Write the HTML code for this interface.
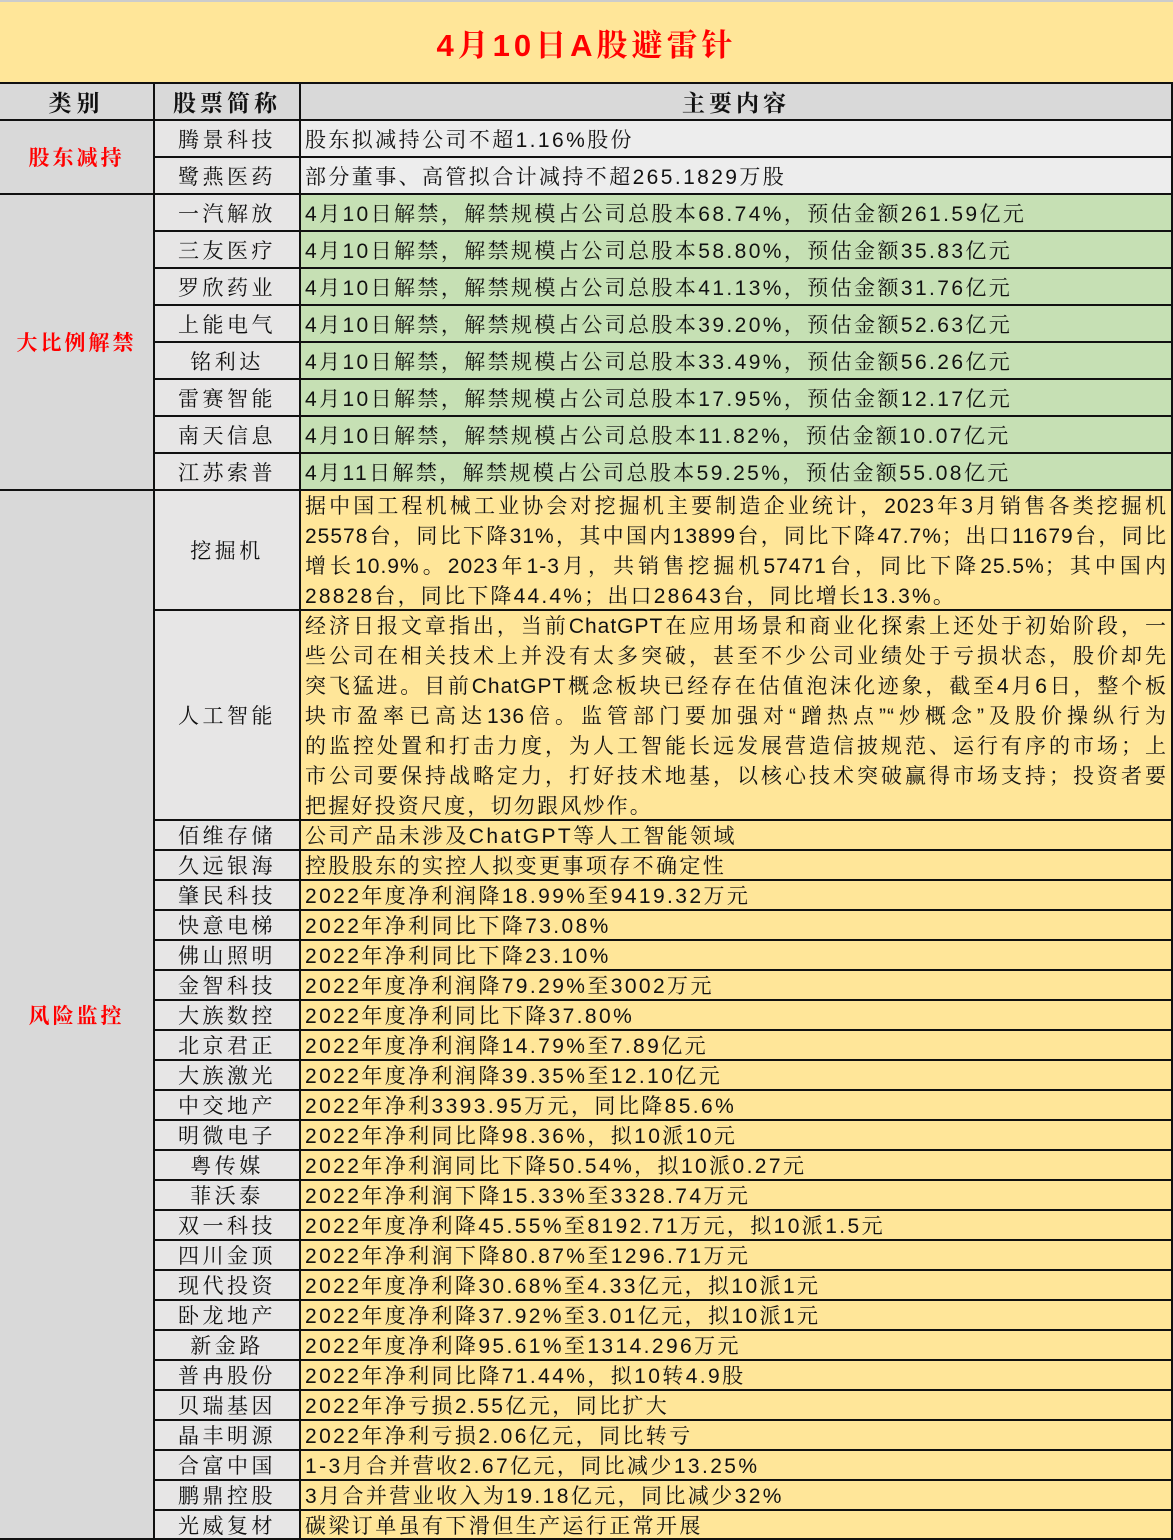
<!DOCTYPE html>
<html><head><meta charset="utf-8">
<style>
*{margin:0;padding:0;box-sizing:border-box}
body{width:1173px;height:1540px;position:relative;overflow:hidden;background:#fff;font-family:"Liberation Sans","Noto Serif CJK SC",serif;color:#111}
.c{position:absolute;border-left:2px solid #111;border-top:2px solid #111;display:flex;align-items:center;white-space:nowrap;overflow:hidden}
.a{background:#d9d9d9;justify-content:center;color:#f00;font-weight:bold;font-size:21px;letter-spacing:3px;left:0;width:153px;border-left:none}
.n{background:#e7e6e6;justify-content:center;font-size:21px;letter-spacing:3.5px;left:153px;width:146px}
.t{left:299px;width:872px;padding-left:4px;font-size:21px;letter-spacing:2.4px}
.g{background:#c6e0b4}.y{background:#ffe699}.e{background:#ededed}
.p{display:block;padding:0 4px 0 4px;white-space:normal}
.p div{height:30px;line-height:30px;text-align:justify;text-align-last:justify;white-space:nowrap;letter-spacing:1px}
.p div.l{text-align-last:left;letter-spacing:2.2px}
</style></head><body>
<div class="c" style="left:0;top:0;width:1173px;height:82px;background:#ffe699;justify-content:center;color:#f00;font-weight:bold;font-size:31px;letter-spacing:4px;border-top:2px solid #ccc;border-left:none">4月10日A股避雷针</div>
<div class="c" style="left:0;top:82px;width:153px;height:37px;background:#d9d9d9;justify-content:center;font-weight:bold;font-size:23px;letter-spacing:5px;border-left:none">类别</div>
<div class="c" style="left:153px;top:82px;width:146px;height:37px;background:#d9d9d9;justify-content:center;font-weight:bold;font-size:23px;letter-spacing:4px">股票简称</div>
<div class="c" style="left:299px;top:82px;width:872px;height:37px;background:#d9d9d9;justify-content:center;font-weight:bold;font-size:23px;letter-spacing:4px">主要内容</div>

<div class="c a" style="top:119px;height:74px">股东减持</div>
<div class="c n" style="top:119px;height:37px">腾景科技</div><div class="c t e" style="top:119px;height:37px">股东拟减持公司不超1.16%股份</div>
<div class="c n" style="top:156px;height:37px">鹭燕医药</div><div class="c t e" style="top:156px;height:37px">部分董事、高管拟合计减持不超265.1829万股</div>

<div class="c a" style="top:193px;height:296px">大比例解禁</div>
<div class="c n" style="top:193px;height:37px">一汽解放</div><div class="c t g" style="top:193px;height:37px">4月10日解禁，解禁规模占公司总股本68.74%，预估金额261.59亿元</div>
<div class="c n" style="top:230px;height:37px">三友医疗</div><div class="c t g" style="top:230px;height:37px">4月10日解禁，解禁规模占公司总股本58.80%，预估金额35.83亿元</div>
<div class="c n" style="top:267px;height:37px">罗欣药业</div><div class="c t g" style="top:267px;height:37px">4月10日解禁，解禁规模占公司总股本41.13%，预估金额31.76亿元</div>
<div class="c n" style="top:304px;height:37px">上能电气</div><div class="c t g" style="top:304px;height:37px">4月10日解禁，解禁规模占公司总股本39.20%，预估金额52.63亿元</div>
<div class="c n" style="top:341px;height:37px">铭利达</div><div class="c t g" style="top:341px;height:37px">4月10日解禁，解禁规模占公司总股本33.49%，预估金额56.26亿元</div>
<div class="c n" style="top:378px;height:37px">雷赛智能</div><div class="c t g" style="top:378px;height:37px">4月10日解禁，解禁规模占公司总股本17.95%，预估金额12.17亿元</div>
<div class="c n" style="top:415px;height:37px">南天信息</div><div class="c t g" style="top:415px;height:37px">4月10日解禁，解禁规模占公司总股本11.82%，预估金额10.07亿元</div>
<div class="c n" style="top:452px;height:37px">江苏索普</div><div class="c t g" style="top:452px;height:37px">4月11日解禁，解禁规模占公司总股本59.25%，预估金额55.08亿元</div>

<div class="c a" style="top:489px;height:1049px">风险监控</div>
<div class="c n" style="top:489px;height:120px">挖掘机</div>
<div class="c t y p" style="top:489px;height:120px;padding-top:1px">
<div>据中国工程机械工业协会对挖掘机主要制造企业统计，2023年3月销售各类挖掘机</div>
<div>25578台，同比下降31%，其中国内13899台，同比下降47.7%；出口11679台，同比</div>
<div>增长10.9%。2023年1-3月，共销售挖掘机57471台，同比下降25.5%；其中国内</div>
<div class="l">28828台，同比下降44.4%；出口28643台，同比增长13.3%。</div></div>
<div class="c n" style="top:609px;height:210px">人工智能</div>
<div class="c t y p" style="top:609px;height:210px;padding-top:1px">
<div>经济日报文章指出，当前ChatGPT在应用场景和商业化探索上还处于初始阶段，一</div>
<div>些公司在相关技术上并没有太多突破，甚至不少公司业绩处于亏损状态，股价却先</div>
<div>突飞猛进。目前ChatGPT概念板块已经存在估值泡沫化迹象，截至4月6日，整个板</div>
<div>块市盈率已高达136倍。监管部门要加强对“蹭热点”“炒概念”及股价操纵行为</div>
<div>的监控处置和打击力度，为人工智能长远发展营造信披规范、运行有序的市场；上</div>
<div>市公司要保持战略定力，打好技术地基，以核心技术突破赢得市场支持；投资者要</div>
<div class="l">把握好投资尺度，切勿跟风炒作。</div></div>

<div class="c n" style="top:819px;height:30px">佰维存储</div><div class="c t y" style="top:819px;height:30px">公司产品未涉及ChatGPT等人工智能领域</div>
<div class="c n" style="top:849px;height:30px">久远银海</div><div class="c t y" style="top:849px;height:30px">控股股东的实控人拟变更事项存不确定性</div>
<div class="c n" style="top:879px;height:30px">肇民科技</div><div class="c t y" style="top:879px;height:30px">2022年度净利润降18.99%至9419.32万元</div>
<div class="c n" style="top:909px;height:30px">快意电梯</div><div class="c t y" style="top:909px;height:30px">2022年净利同比下降73.08%</div>
<div class="c n" style="top:939px;height:30px">佛山照明</div><div class="c t y" style="top:939px;height:30px">2022年净利同比下降23.10%</div>
<div class="c n" style="top:969px;height:30px">金智科技</div><div class="c t y" style="top:969px;height:30px">2022年度净利润降79.29%至3002万元</div>
<div class="c n" style="top:999px;height:30px">大族数控</div><div class="c t y" style="top:999px;height:30px">2022年度净利同比下降37.80%</div>
<div class="c n" style="top:1029px;height:30px">北京君正</div><div class="c t y" style="top:1029px;height:30px">2022年度净利润降14.79%至7.89亿元</div>
<div class="c n" style="top:1059px;height:30px">大族激光</div><div class="c t y" style="top:1059px;height:30px">2022年度净利润降39.35%至12.10亿元</div>
<div class="c n" style="top:1089px;height:30px">中交地产</div><div class="c t y" style="top:1089px;height:30px">2022年净利3393.95万元，同比降85.6%</div>
<div class="c n" style="top:1119px;height:30px">明微电子</div><div class="c t y" style="top:1119px;height:30px">2022年净利同比降98.36%，拟10派10元</div>
<div class="c n" style="top:1149px;height:30px">粤传媒</div><div class="c t y" style="top:1149px;height:30px">2022年净利润同比下降50.54%，拟10派0.27元</div>
<div class="c n" style="top:1179px;height:30px">菲沃泰</div><div class="c t y" style="top:1179px;height:30px">2022年净利润下降15.33%至3328.74万元</div>
<div class="c n" style="top:1209px;height:30px">双一科技</div><div class="c t y" style="top:1209px;height:30px">2022年度净利降45.55%至8192.71万元，拟10派1.5元</div>
<div class="c n" style="top:1239px;height:30px">四川金顶</div><div class="c t y" style="top:1239px;height:30px">2022年净利润下降80.87%至1296.71万元</div>
<div class="c n" style="top:1269px;height:30px">现代投资</div><div class="c t y" style="top:1269px;height:30px">2022年度净利降30.68%至4.33亿元，拟10派1元</div>
<div class="c n" style="top:1299px;height:30px">卧龙地产</div><div class="c t y" style="top:1299px;height:30px">2022年度净利降37.92%至3.01亿元，拟10派1元</div>
<div class="c n" style="top:1329px;height:30px">新金路</div><div class="c t y" style="top:1329px;height:30px">2022年度净利降95.61%至1314.296万元</div>
<div class="c n" style="top:1359px;height:30px">普冉股份</div><div class="c t y" style="top:1359px;height:30px">2022年净利同比降71.44%，拟10转4.9股</div>
<div class="c n" style="top:1389px;height:30px">贝瑞基因</div><div class="c t y" style="top:1389px;height:30px">2022年净亏损2.55亿元，同比扩大</div>
<div class="c n" style="top:1419px;height:30px">晶丰明源</div><div class="c t y" style="top:1419px;height:30px">2022年净利亏损2.06亿元，同比转亏</div>
<div class="c n" style="top:1449px;height:30px">合富中国</div><div class="c t y" style="top:1449px;height:30px">1-3月合并营收2.67亿元，同比减少13.25%</div>
<div class="c n" style="top:1479px;height:30px">鹏鼎控股</div><div class="c t y" style="top:1479px;height:30px">3月合并营业收入为19.18亿元，同比减少32%</div>
<div class="c n" style="top:1509px;height:29px">光威复材</div><div class="c t y" style="top:1509px;height:29px">碳梁订单虽有下滑但生产运行正常开展</div>
<div style="position:absolute;left:0;top:1538px;width:1173px;height:2px;background:#111"></div>
<div style="position:absolute;left:1171px;top:82px;width:2px;height:1458px;background:#111"></div>
</body></html>
